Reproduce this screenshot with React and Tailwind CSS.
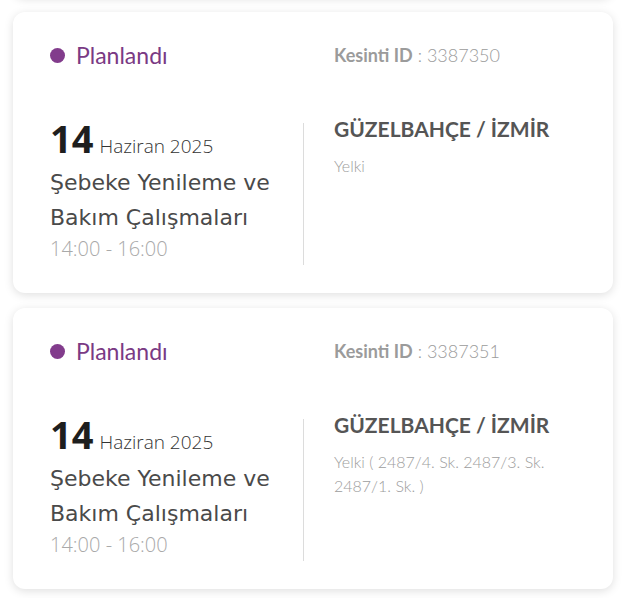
const outages = [
  { id: '3387349', district: 'Yelki' },
  { id: '3387350', district: 'Yelki' },
  { id: '3387351', district: 'Yelki ( 2487/4. Sk. 2487/3. Sk. 2487/1. Sk. )' },
  { id: '3387352', district: 'Yelki' },
];

const leftFont = { fontFamily: '"Open Sans", "Noto Sans", sans-serif' };

function OutageCard({ item }) {
  return (
    <div className="bg-white rounded-[12px] shadow-[0_2px_10px_rgba(0,0,0,0.13)] pl-[37px] pr-[20px] pt-[29px] pb-[28px]">
      {/* Durum + ID */}
      <div className="flex items-center h-[28px] mb-[46px] font-['Lato',sans-serif]">
        <div className="w-[284px] flex items-center gap-[11px]">
          <span className="w-[15px] h-[15px] rounded-full bg-[#823c8c]" />
          <span className="text-[23px] leading-[28px] text-[#7a3a84]">Planlandı</span>
        </div>
        <div className="text-[18px] leading-[28px] text-[#9b9b9b]">
          <span className="font-bold">Kesinti ID</span>
          <span className="font-light"> : {item.id}</span>
        </div>
      </div>

      <div className="flex items-start">
        <div className="w-[254px] mt-[8px] border-r border-[#dcdcdc] pb-[2px]" style={leftFont}>
          <div className="flex items-baseline gap-[6px] h-[30px] leading-[30px]">
            <span className="text-[38px] font-bold text-[#1e1e1e]">14</span>
            <span className="text-[19px] font-light text-[#333]">Haziran 2025</span>
          </div>
          <div className="mt-[12px] text-[22px] leading-[35px] text-[#4a4a4a] pr-[10px] font-['DejaVu_Sans',sans-serif]">
            Şebeke Yenileme ve Bakım Çalışmaları
          </div>
          <div className="text-[20px] leading-[28px] font-light text-[#a9a9a9]">14:00 - 16:00</div>
        </div>

        <div className="pl-[30px] font-['Lato',sans-serif]">
          <div className="text-[21px] leading-[28px] font-bold text-[#555]">GÜZELBAHÇE / İZMİR</div>
          <div className="mt-[11px] text-[16px] leading-[24px] font-light text-[#9d9d9d] w-[225px]">
            {item.district}
          </div>
        </div>
      </div>
    </div>
  );
}

export default function App() {
  return (
    <div className="w-[624px] h-[598px] overflow-hidden bg-white">
      <div className="-mt-[284px] pl-[13px] pr-[11px] flex flex-col gap-[15px]">
        {outages.map((o) => (
          <OutageCard key={o.id} item={o} />
        ))}
      </div>
    </div>
  );
}
